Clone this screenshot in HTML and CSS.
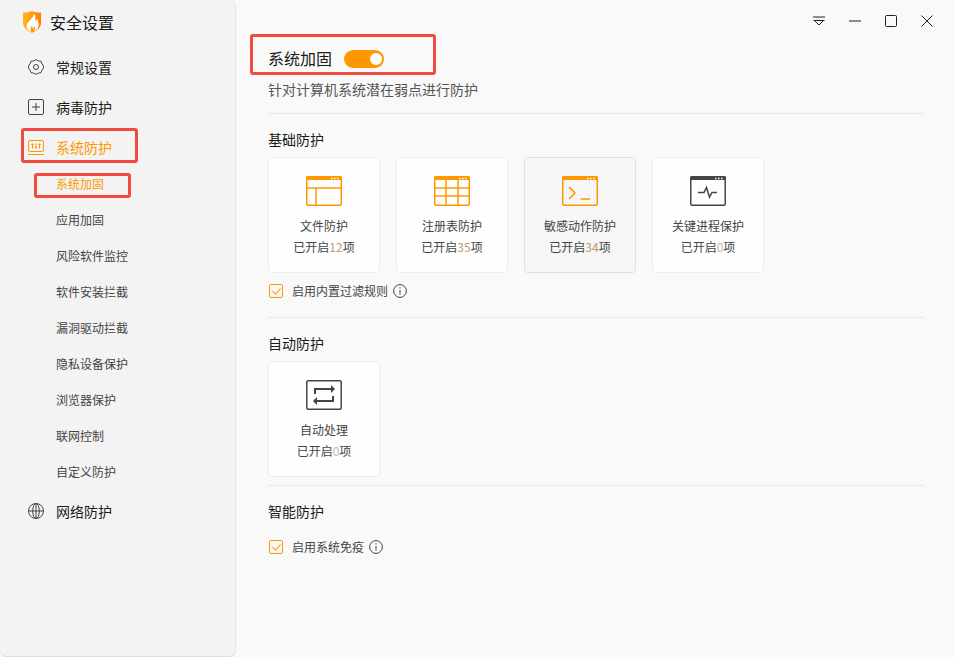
FILE: index.html
```
<!DOCTYPE html>
<html lang="zh-CN">
  <head>
    <meta charset="UTF-8" />
    <meta name="viewport" content="width=device-width, initial-scale=1.0" />
    <title>安全设置</title>
    <link rel="stylesheet" href="styles.css">
  </head>
  <body>
    <aside class="sidebar">
      <div class="brand">
        <svg class="logo" width="20" height="22" viewBox="0 0 20 22">
          <defs>
            <linearGradient id="shield" x1="0" y1="0" x2="1" y2="0">
              <stop offset="0" stop-color="#ffb81c" />
              <stop offset="1" stop-color="#ff7c00" />
            </linearGradient>
          </defs>
          <path fill="url(#shield)" d="M10 0C7 1.2 4 1.8 1 1.6V12c0 4.500 4 7.500 9 9.800 5-2.300 9-5.300 9-9.800V1.600C16 1.800 13 1.200 10 0z" />
          <path fill="#fff" d="M11.500 2.200c.6 3.300-1.700 5-3.800 7.200C5.500 11.700 4 13.700 4.700 16.200c.5 1.900 2 3.600 4.600 4.900-1.500-2.400-1-4.400.8-6.300.2 1.300.9 1.900.5 3.300 1.400-.9 2-2.200 1.900-3.600 1 1.700.7 4-.9 6.100 3.700-2 5.400-4.500 5.100-7.300-.2-2-1-3.200-.9-5.300-1.200.6-1.700 1.500-1.900 2.800-.8-2.700.4-6-2.400-8.600z" />
        </svg>
        <span>安全设置</span>
      </div>
      <nav class="menu">
        <a href="#" class="menu-item">
          <svg class="icon" viewBox="0 0 16 16">
            <path d="M8 .6l2.300 1.300 2.700.4 1 2.500 1.500 2.200v2L14 11.200l-1 2.500-2.700.4L8 15.400l-2.300-1.300-2.700-.4-1-2.500L.5 9V7L2 4.800l1-2.500 2.700-.4z" />
            <circle cx="8" cy="8" r="2.500" />
          </svg>
          常规设置
        </a>
        <a href="#" class="menu-item">
          <svg class="icon" viewBox="0 0 16 16">
            <rect x=".5" y=".5" width="15" height="15" rx="1.500" />
            <path d="M8 4v8M4 8h8" />
          </svg>
          病毒防护
        </a>
        <a href="#" class="menu-item active marked">
          <svg class="icon" viewBox="0 0 16 16">
            <rect x=".5" y="1.500" width="15" height="11" rx="1.500" />
            <path d="M0 15.500h16M4.500 4.500v5M8 4.500v5M11.500 4.500v5M3.300 5.500h2.400M6.800 8.500h2.400M10.300 5.500h2.400" />
          </svg>
          系统防护
        </a>
        <div class="submenu">
          <a href="#" class="active marked">系统加固</a>
          <a href="#">应用加固</a>
          <a href="#">风险软件监控</a>
          <a href="#">软件安装拦截</a>
          <a href="#">漏洞驱动拦截</a>
          <a href="#">隐私设备保护</a>
          <a href="#">浏览器保护</a>
          <a href="#">联网控制</a>
          <a href="#">自定义防护</a>
        </div>
        <a href="#" class="menu-item">
          <svg class="icon" viewBox="0 0 16 16">
            <circle cx="8" cy="8" r="7.500" />
            <ellipse cx="8" cy="8" rx="3.300" ry="7.500" />
            <path d="M8 .5v15M.5 8h15" />
          </svg>
          网络防护
        </a>
      </nav>
    </aside>

    <main class="content">
      <div class="window-bar">
        <button type="button" aria-label="菜单">
          <svg width="12" height="12" viewBox="0 0 12 12"><path d="M0 2h12M.5 5.500h11M1.500 5.500L6 10l4.500-4.500" /></svg>
        </button>
        <button type="button" aria-label="最小化">
          <svg width="12" height="12" viewBox="0 0 12 12"><path d="M0 6h12" /></svg>
        </button>
        <button type="button" aria-label="最大化">
          <svg width="12" height="12" viewBox="0 0 12 12"><rect x=".5" y=".5" width="11" height="11" rx="1" /></svg>
        </button>
        <button type="button" aria-label="关闭">
          <svg width="12" height="12" viewBox="0 0 12 12"><path d="M.5.5l11 11M11.500.5l-11 11" /></svg>
        </button>
      </div>

      <div class="page">
        <div class="page-title marked">
          <h1><label for="harden">系统加固</label></h1>
          <input type="checkbox" id="harden" class="switch" checked />
        </div>
        <p class="desc">针对计算机系统潜在弱点进行防护</p>

        <section>
          <h2>基础防护</h2>
          <div class="cards">
            <button type="button" class="card">
              <svg class="card-icon" viewBox="0 0 36 30">
                <rect x=".75" y=".75" width="34.500" height="28.500" rx="1.500" />
                <path d="M1 12h34M10 12v17" />
                <path class="fill" d="M0 4V2a2 2 0 0 1 2-2h32a2 2 0 0 1 2 2v2z" />
                <path class="dots" d="M25 2.500h1.500M28 2.500h1.500M31 2.500h1.500" />
              </svg>
              <span>文件防护</span>
              <span>已开启<b>12</b>项</span>
            </button>
            <button type="button" class="card">
              <svg class="card-icon" viewBox="0 0 36 30">
                <rect x=".75" y=".75" width="34.500" height="28.500" rx="1.500" />
                <path d="M1 12h34M1 20h34M12 4v25M24 4v25" />
                <path class="fill" d="M0 4V2a2 2 0 0 1 2-2h32a2 2 0 0 1 2 2v2z" />
                <path class="dots" d="M25 2.500h1.500M28 2.500h1.500M31 2.500h1.500" />
              </svg>
              <span>注册表防护</span>
              <span>已开启<b>35</b>项</span>
            </button>
            <button type="button" class="card hover">
              <svg class="card-icon" viewBox="0 0 36 30">
                <rect x=".75" y=".75" width="34.500" height="28.500" rx="1.500" />
                <path d="M7 11l6 6-6 6M18.500 23h9.500" />
                <path class="fill" d="M0 4V2a2 2 0 0 1 2-2h32a2 2 0 0 1 2 2v2z" />
                <path class="dots" d="M25 2.500h1.500M28 2.500h1.500M31 2.500h1.500" />
              </svg>
              <span>敏感动作防护</span>
              <span>已开启<b>34</b>项</span>
            </button>
            <button type="button" class="card off">
              <svg class="card-icon" viewBox="0 0 36 30">
                <rect x=".75" y=".75" width="34.500" height="28.500" rx="1.500" />
                <path d="M8 16.500h6l2.500-5 3 9.500 2.500-4.500h5" />
                <path class="fill" d="M0 4V2a2 2 0 0 1 2-2h32a2 2 0 0 1 2 2v2z" />
                <path class="dots" d="M25 2.500h1.500M28 2.500h1.500M31 2.500h1.500" />
              </svg>
              <span>关键进程保护</span>
              <span>已开启<b>0</b>项</span>
            </button>
          </div>
          <div class="option">
            <input type="checkbox" id="filter" class="check" checked />
            <label for="filter">启用内置过滤规则</label>
            <svg class="info" viewBox="0 0 14 14"><circle cx="7" cy="7" r="6.400" /><path d="M7 3.300v1.400M7 6v4.700" /></svg>
          </div>
        </section>

        <section>
          <h2>自动防护</h2>
          <div class="cards">
            <button type="button" class="card off">
              <svg class="card-icon" viewBox="0 0 36 30">
                <rect x=".75" y=".75" width="34.500" height="28.500" rx="1.500" />
                <path stroke-width="2" d="M9 14V9h17M27 16v5H10" />
                <path class="fill" d="M25 5l4 4-4 4zM11 17l-4 4 4 4z" />
              </svg>
              <span>自动处理</span>
              <span>已开启<b>0</b>项</span>
            </button>
          </div>
        </section>

        <section>
          <h2>智能防护</h2>
          <div class="option">
            <input type="checkbox" id="immune" class="check" checked />
            <label for="immune">启用系统免疫</label>
            <svg class="info" viewBox="0 0 14 14"><circle cx="7" cy="7" r="6.400" /><path d="M7 3.300v1.400M7 6v4.700" /></svg>
          </div>
        </section>
      </div>
    </main>
  </body>
</html>
```

FILE: styles.css
```
* {
  margin: 0;
  padding: 0;
  box-sizing: border-box;
}

body {
  display: flex;
  min-height: 100vh;
  font-family: "Noto Sans CJK SC", sans-serif;
  font-size: 14px;
  color: #1a1a1a;
  background-color: #f9f9f9;
}

a {
  color: inherit;
  text-decoration: none;
}

button {
  font-family: inherit;
  border: none;
  background: none;
  cursor: pointer;
}

svg {
  fill: none;
  stroke: currentColor;
}

/* sidebar */
.sidebar {
  flex: 0 0 236px;
  background-color: #f3f3f3;
  border-right: 1px solid #e5e5e5;
  border-bottom: 1px solid #dedede;
  border-radius: 0 6px 6px 6px;
}

.brand {
  display: flex;
  align-items: center;
  gap: 8px;
  height: 43px;
  padding-left: 22px;
  font-size: 16px;
}

.logo {
  stroke: none;
}

.menu {
  padding-top: 4px;
}

.menu-item {
  position: relative;
  display: flex;
  align-items: center;
  gap: 12px;
  height: 40px;
  padding-left: 28px;
}

.icon {
  width: 16px;
  height: 16px;
  color: #444;
}

.submenu {
  margin: -1px 0 1px;
}

.submenu a {
  position: relative;
  display: block;
  padding-left: 56px;
  font-size: 12px;
  line-height: 36px;
  color: #444;
}

.menu .active,
.active .icon {
  color: #ff9800;
}

/* red highlight frames */
.marked::after {
  content: "";
  position: absolute;
  box-sizing: border-box;
  border: 3px solid #f04b41;
  border-radius: 3px;
}

.menu-item.marked::after {
  left: 21px;
  top: 1px;
  width: 117px;
  height: 35px;
}

.submenu .marked::after {
  left: 34px;
  top: 7px;
  width: 97px;
  height: 25px;
}

.page-title.marked::after {
  left: -18px;
  top: -8px;
  width: 186px;
  height: 41px;
  pointer-events: none;
}

/* content */
.content {
  flex: 1;
}

.window-bar {
  display: flex;
  justify-content: flex-end;
  height: 42px;
  padding-right: 10px;
}

.window-bar button {
  display: flex;
  align-items: center;
  justify-content: center;
  width: 36px;
  color: #222;
}

.page {
  padding: 0 31px 32px 32px;
}

.page-title {
  position: relative;
  display: flex;
  align-items: center;
  gap: 12px;
  height: 34px;
}

.page-title h1 {
  padding-bottom: 2px;
  font-size: 16px;
  font-weight: normal;
}

.switch {
  appearance: none;
  display: flex;
  align-items: center;
  width: 40px;
  height: 18px;
  padding: 0 2px;
  border-radius: 9px;
  background-color: #ccc;
  cursor: pointer;
}

.switch::before {
  content: "";
  width: 12px;
  height: 12px;
  border-radius: 50%;
  background-color: #fff;
}

.switch:checked {
  justify-content: flex-end;
  background-color: #ff9800;
}

.desc {
  margin-bottom: 11px;
  line-height: 26px;
  color: #555;
}

section {
  padding: 13px 0 8px;
  border-top: 1px solid #e8e8e8;
}

h2 {
  margin-bottom: 6px;
  font-size: 14px;
  font-weight: normal;
  line-height: 24px;
}

.cards {
  display: flex;
  flex-wrap: wrap;
  gap: 16px;
}

.card {
  display: flex;
  flex-direction: column;
  align-items: center;
  width: 112px;
  height: 116px;
  padding-top: 18px;
  border: 1px solid #ececec;
  border-radius: 4px;
  background-color: #fefefe;
  font-size: 12px;
  line-height: 21px;
  color: #444;
}

.card.hover,
.card:hover {
  background-color: #f6f6f6;
  border-color: #e0e0e0;
}

.card-icon {
  width: 36px;
  height: 30px;
  margin-bottom: 9px;
  color: #ff9800;
  stroke-width: 1.5;
}

.card-icon .fill {
  fill: currentColor;
  stroke: none;
}

.card-icon .dots {
  stroke: #fff;
}

.off .card-icon {
  color: #444;
}

.card b {
  font-weight: normal;
  color: #b99b71;
}

.off b {
  color: #bbb;
}

.option {
  display: flex;
  align-items: center;
  height: 36px;
  padding-left: 1px;
  font-size: 12px;
  color: #444;
}

.option label {
  padding-bottom: 2px;
}

.check {
  appearance: none;
  display: flex;
  justify-content: center;
  width: 14px;
  height: 14px;
  margin-right: 9px;
  border: 1px solid #ff9800;
  border-radius: 2px;
  cursor: pointer;
}

.check:checked::before {
  content: "";
  width: 4px;
  height: 7px;
  margin-top: 1px;
  border: solid #ff9800;
  border-width: 0 1px 1px 0;
  transform: rotate(40deg);
}

.info {
  width: 14px;
  height: 14px;
  margin-left: 5px;
}
```
